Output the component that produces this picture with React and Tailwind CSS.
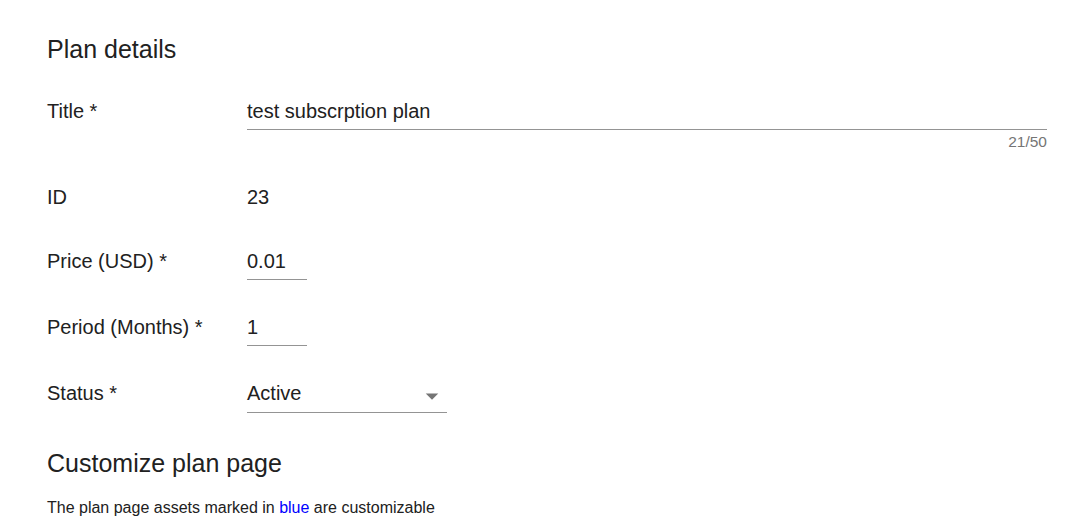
import React from 'react';

const Row = ({ label, children, className = '' }) => (
  <div className={`flex items-start ${className}`}>
    <div className="w-[200px] shrink-0 text-[20px] leading-[24px]">{label}</div>
    {children}
  </div>
);

const ArrowDown = () => (
  <svg
    className="absolute right-0 top-0 w-[30px] h-[30px]"
    viewBox="0 0 24 24"
    fill="#757575"
  >
    <path d="M7 10l5 5 5-5z" />
  </svg>
);

export default function App() {
  return (
    <div
      className="min-h-screen bg-white pl-[47px] pr-[43px] pt-[34px] text-[#212121]"
      style={{ fontFamily: '"Liberation Sans", Arial, sans-serif' }}
    >
      <h2 className="text-[25px] leading-[30px]">Plan details</h2>

      <Row label="Title *" className="mt-[35px]">
        <div className="flex-1 flex flex-col">
          <div className="text-[20px] leading-[24px] pb-[6px] border-b border-[#949494]">
            test subscrption plan
          </div>
          <div className="mt-[3px] text-right text-[15.5px] leading-[18px] text-[#757575]">21/50</div>
        </div>
      </Row>

      <Row label="ID" className="mt-[34px]">
        <div className="text-[20px] leading-[24px]">23</div>
      </Row>

      <Row label="Price (USD) *" className="mt-[40px]">
        <div className="w-[60px] text-[20px] leading-[24px] pb-[6px] border-b border-[#949494]">0.01</div>
      </Row>

      <Row label="Period (Months) *" className="mt-[35px]">
        <div className="w-[60px] text-[20px] leading-[24px] pb-[6px] border-b border-[#949494]">1</div>
      </Row>

      <Row label="Status *" className="mt-[35px]">
        <div className="relative w-[200px] text-[20px] leading-[24px] pb-[7px] border-b border-[#949494]">
          Active
          <ArrowDown />
        </div>
      </Row>

      <h2 className="mt-[35px] text-[25px] leading-[30px]">Customize plan page</h2>
      <p className="mt-[20px] text-[16px] leading-[20px]">
        The plan page assets marked in <span className="text-[#0000ff]">blue</span> are customizable
      </p>
    </div>
  );
}
